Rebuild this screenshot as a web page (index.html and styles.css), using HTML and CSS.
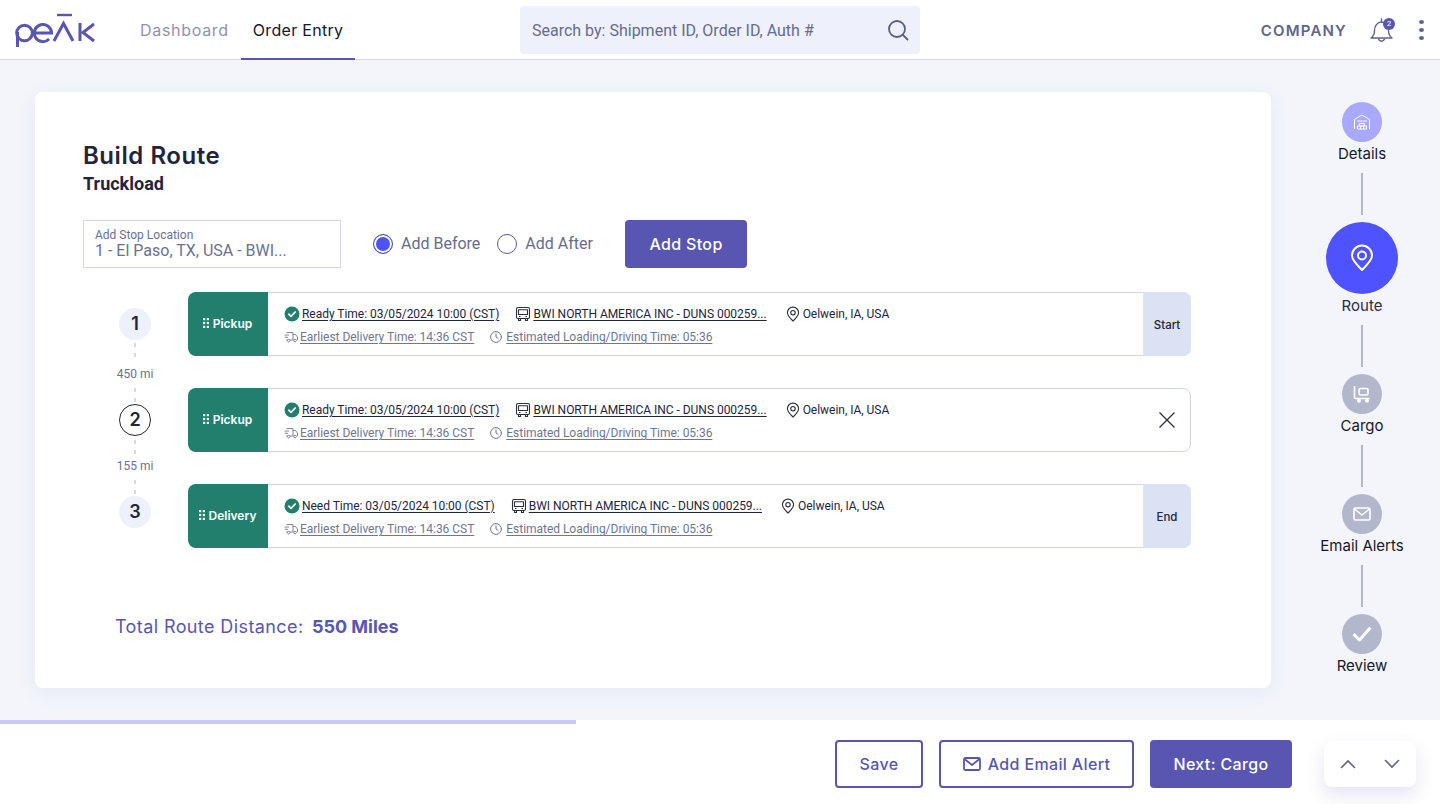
FILE: index.html
```html
<!DOCTYPE html>
<html lang="en">

<head>
    <meta charset="UTF-8" />
    <meta name="viewport" content="width=device-width, initial-scale=1.0" />
    <title>Build Route</title>
    <link rel="stylesheet" href="styles.css">
</head>

<body>
    <svg class="defs" width="0" height="0" aria-hidden="true">
        <symbol id="i-check" viewBox="0 0 16 16">
            <circle cx="8" cy="8" r="7.500" fill="#237f6d" />
            <path d="M4.800 8.200l2.200 2.200 4.200-4.400" fill="none" stroke="#fff" stroke-width="1.700" stroke-linecap="round" stroke-linejoin="round" />
        </symbol>
        <symbol id="i-bus" viewBox="0 0 16 16">
            <g fill="none" stroke="#2b2d42" stroke-width="1.100" stroke-linejoin="round">
                <rect x="1.500" y="1.500" width="13" height="11" rx="1.500" />
                <path d="M3.500 3.800h9v4.700h-9z" />
                <path d="M3.500 12.500v2h2v-2M10.500 12.500v2h2v-2" />
                <path d="M4 10.500h1.500M10.500 10.500H12" />
            </g>
        </symbol>
        <symbol id="i-pin" viewBox="0 0 16 16">
            <g fill="none" stroke="#2b2d42" stroke-width="1.100" stroke-linejoin="round">
                <path d="M8 15c-3-3-5.600-5.300-5.600-8.300a5.600 5.600 0 0 1 11.200 0C13.600 9.700 11 12 8 15z" />
                <circle cx="8" cy="6.700" r="2.200" />
            </g>
        </symbol>
        <symbol id="i-truck" viewBox="0 0 14 12">
            <g fill="none" stroke="#7f84a5" stroke-width="1">
                <path d="M2.500 1.500h6.500v7.500H6M3.500 9H2M.5 4H5M.5 6.300H4" />
                <path d="M9 3.500h2.500L13.500 6v3h-1M9 9h.5" />
                <circle cx="4.700" cy="9.500" r="1.300" />
                <circle cx="11" cy="9.500" r="1.300" />
            </g>
        </symbol>
        <symbol id="i-clock" viewBox="0 0 12 12">
            <g fill="none" stroke="#6f7596" stroke-width="1" stroke-linecap="round">
                <circle cx="6" cy="6" r="5.400" />
                <path d="M6 2.800V6l2 1.300" />
            </g>
        </symbol>
        <symbol id="i-grip" viewBox="0 0 6 10">
            <g fill="#fff">
                <rect width="2.200" height="2.200" />
                <rect x="3.800" width="2.200" height="2.200" />
                <rect y="3.900" width="2.200" height="2.200" />
                <rect x="3.800" y="3.900" width="2.200" height="2.200" />
                <rect y="7.800" width="2.200" height="2.200" />
                <rect x="3.800" y="7.800" width="2.200" height="2.200" />
            </g>
        </symbol>
    </svg>

    <header class="topbar">
        <div class="topbar-left">
            <svg class="logo" width="82" height="36" viewBox="0 0 82 36" role="img" aria-label="Peak">
                <g fill="none" stroke="#5856b0" stroke-width="3">
                    <path d="M3.500 35V20" />
                    <circle cx="10.500" cy="21" r="7.800" />
                    <path d="M20.500 21h17a8.600 8.600 0 1 0-2.400 6" />
                    <path d="M40 29l9.500-17.500L59 29" />
                    <path d="M43 3h15" stroke-width="2.400" />
                    <path d="M66 11v18M80 12l-11 8.500L80 29" />
                </g>
            </svg>
            <nav class="tabs">
                <a class="tab" href="#">Dashboard</a>
                <a class="tab tab-active" href="#">Order Entry</a>
            </nav>
        </div>

        <div class="search">
            <span>Search by: Shipment ID, Order ID, Auth #</span>
            <svg width="22" height="22" viewBox="0 0 22 22" fill="none" stroke="#5a6080" stroke-width="1.800" stroke-linecap="round">
                <circle cx="10" cy="10" r="8" />
                <path d="M16 16l4.500 4.500" />
            </svg>
        </div>

        <div class="topbar-right">
            <span class="company">COMPANY</span>
            <div class="bell">
                <svg width="24" height="26" viewBox="0 0 24 26" fill="none" stroke="#5f6588" stroke-width="1.400" stroke-linejoin="round" stroke-linecap="round">
                    <path d="M1 21c2.500-1.800 3.500-4 3.500-7.500C4.500 9 7.300 5 11.500 5c4.200 0 7 4 7 8.500 0 3.500 1 5.700 3.500 7.500z" />
                    <path d="M8.500 22c.5 1.500 1.500 2.200 3 2.200s2.500-.7 3-2.200" />
                    <path d="M11.500 2v3" />
                </svg>
                <span class="bell-badge">2</span>
            </div>
            <div class="kebab"><i></i><i></i><i></i></div>
        </div>
    </header>

    <main class="page">
        <section class="card">
            <h1>Build Route</h1>
            <h2>Truckload</h2>

            <div class="add-row">
                <div class="field">
                    <label>Add Stop Location</label>
                    <div class="field-value">1 - El Paso, TX, USA - BWI...</div>
                </div>
                <div class="radios">
                    <span class="radio radio-on"></span><span class="radio-label">Add Before</span>
                    <span class="radio"></span><span class="radio-label">Add After</span>
                </div>
                <button class="btn btn-solid btn-add" type="button">Add Stop</button>
            </div>

            <div class="route">
                <div class="rail">
                    <span class="num">1</span>
                    <span class="dots dots-a"></span>
                    <span class="miles miles-a">450 mi</span>
                    <span class="dots dots-b"></span>
                    <span class="num num-current">2</span>
                    <span class="dots dots-c"></span>
                    <span class="miles miles-b">155 mi</span>
                    <span class="dots dots-b"></span>
                    <span class="num">3</span>
                </div>

                <div class="stops">
                    <div class="stop">
                        <div class="stop-tag"><svg width="6" height="10"><use href="#i-grip" /></svg>Pickup</div>
                        <div class="stop-body">
                            <div class="stop-line">
                                <svg width="16" height="16"><use href="#i-check" /></svg>
                                <a class="link-dark">Ready Time: 03/05/2024 10:00 (CST)</a>
                                <svg class="ico-bus" width="16" height="16"><use href="#i-bus" /></svg>
                                <a class="link-dark">BWI NORTH AMERICA INC - DUNS 000259...</a>
                                <svg class="ico-pin" width="16" height="16"><use href="#i-pin" /></svg>
                                <span>Oelwein, IA, USA</span>
                            </div>
                            <div class="stop-line stop-sub">
                                <svg width="14" height="12"><use href="#i-truck" /></svg>
                                <a class="link-soft">Earliest Delivery Time: 14:36 CST</a>
                                <svg class="ico-clock" width="12" height="12"><use href="#i-clock" /></svg>
                                <a class="link-soft">Estimated Loading/Driving Time: 05:36</a>
                            </div>
                        </div>
                        <div class="stop-end">Start</div>
                    </div>

                    <div class="stop">
                        <div class="stop-tag"><svg width="6" height="10"><use href="#i-grip" /></svg>Pickup</div>
                        <div class="stop-body">
                            <div class="stop-line">
                                <svg width="16" height="16"><use href="#i-check" /></svg>
                                <a class="link-dark">Ready Time: 03/05/2024 10:00 (CST)</a>
                                <svg class="ico-bus" width="16" height="16"><use href="#i-bus" /></svg>
                                <a class="link-dark">BWI NORTH AMERICA INC - DUNS 000259...</a>
                                <svg class="ico-pin" width="16" height="16"><use href="#i-pin" /></svg>
                                <span>Oelwein, IA, USA</span>
                            </div>
                            <div class="stop-line stop-sub">
                                <svg width="14" height="12"><use href="#i-truck" /></svg>
                                <a class="link-soft">Earliest Delivery Time: 14:36 CST</a>
                                <svg class="ico-clock" width="12" height="12"><use href="#i-clock" /></svg>
                                <a class="link-soft">Estimated Loading/Driving Time: 05:36</a>
                            </div>
                        </div>
                        <div class="stop-close">
                            <svg width="16" height="16" viewBox="0 0 16 16" fill="none" stroke="#2b2d42" stroke-width="1.300">
                                <path d="M.5.500l15 15M15.500.500l-15 15" />
                            </svg>
                        </div>
                    </div>

                    <div class="stop">
                        <div class="stop-tag"><svg width="6" height="10"><use href="#i-grip" /></svg>Delivery</div>
                        <div class="stop-body">
                            <div class="stop-line">
                                <svg width="16" height="16"><use href="#i-check" /></svg>
                                <a class="link-dark">Need Time: 03/05/2024 10:00 (CST)</a>
                                <svg class="ico-bus" width="16" height="16"><use href="#i-bus" /></svg>
                                <a class="link-dark">BWI NORTH AMERICA INC - DUNS 000259...</a>
                                <svg class="ico-pin" width="16" height="16"><use href="#i-pin" /></svg>
                                <span>Oelwein, IA, USA</span>
                            </div>
                            <div class="stop-line stop-sub">
                                <svg width="14" height="12"><use href="#i-truck" /></svg>
                                <a class="link-soft">Earliest Delivery Time: 14:36 CST</a>
                                <svg class="ico-clock" width="12" height="12"><use href="#i-clock" /></svg>
                                <a class="link-soft">Estimated Loading/Driving Time: 05:36</a>
                            </div>
                        </div>
                        <div class="stop-end">End</div>
                    </div>
                </div>
            </div>

            <p class="total">Total Route Distance: <b>550 Miles</b></p>
        </section>

        <aside class="steps">
            <div class="step-icon step-done">
                <svg width="18" height="18" viewBox="0 0 18 18" fill="none" stroke="#fff" stroke-width="1">
                    <path d="M1.500 16V6.500L9 2l7.500 4.500V16" />
                    <path d="M4 8h10M6.500 10.500h5v2.500h-5zM4.500 13h9v3h-9zM7.500 13v3M10.500 13v3" />
                </svg>
            </div>
            <span class="step-label">Details</span>
            <span class="step-line"></span>

            <div class="step-icon step-current">
                <svg width="24" height="28" viewBox="0 0 24 28" fill="none" stroke="#fff" stroke-width="2">
                    <path d="M12 26C7 20.500 2 16.500 2 11.500a10 10 0 0 1 20 0C22 16.500 17 20.500 12 26z" stroke-linejoin="round" />
                    <circle cx="12" cy="11.500" r="4" />
                </svg>
            </div>
            <span class="step-label step-label-current">Route</span>
            <span class="step-line"></span>

            <div class="step-icon">
                <svg width="18" height="18" viewBox="0 0 18 18" fill="none" stroke="#fff" stroke-width="1.600" stroke-linejoin="round">
                    <path d="M1.500 1v11.500c0 .6.400 1 1 1H16.500" />
                    <rect x="6" y="3.500" width="9" height="6.500" rx="1.500" />
                    <circle cx="6" cy="15.800" r="1.200" fill="#fff" />
                    <circle cx="14" cy="15.800" r="1.200" fill="#fff" />
                </svg>
            </div>
            <span class="step-label">Cargo</span>
            <span class="step-line"></span>

            <div class="step-icon">
                <svg width="18" height="14" viewBox="0 0 18 14" fill="none" stroke="#fff" stroke-width="1.600" stroke-linejoin="round">
                    <rect x="1" y="1" width="16" height="12" rx="1.500" />
                    <path d="M1.500 2l7.500 6 7.500-6" />
                </svg>
            </div>
            <span class="step-label">Email Alerts</span>
            <span class="step-line"></span>

            <div class="step-icon">
                <svg width="20" height="16" viewBox="0 0 20 16" fill="none" stroke="#fff" stroke-width="3" stroke-linejoin="round">
                    <path d="M1.500 8L7.500 14 18.500 1.500" />
                </svg>
            </div>
            <span class="step-label">Review</span>
        </aside>
    </main>

    <footer class="bottom">
        <div class="progress"></div>
        <div class="actions">
            <button class="btn btn-line btn-save" type="button">Save</button>
            <button class="btn btn-line btn-alert" type="button">
                <svg width="18" height="14" viewBox="0 0 18 14" fill="none" stroke="#5856b0" stroke-width="1.800" stroke-linejoin="round">
                    <rect x="1" y="1" width="16" height="12" rx="1.500" />
                    <path d="M1.500 2l7.500 6 7.500-6" />
                </svg>
                Add Email Alert
            </button>
            <button class="btn btn-solid btn-next" type="button">Next: Cargo</button>
            <div class="arrows">
                <svg width="16" height="10" viewBox="0 0 16 10" fill="none" stroke="#5f6588" stroke-width="1.600"><path d="M1 9l7-7 7 7" /></svg>
                <svg width="16" height="10" viewBox="0 0 16 10" fill="none" stroke="#5f6588" stroke-width="1.600"><path d="M1 1l7 7 7-7" /></svg>
            </div>
        </div>
    </footer>
</body>

</html>
```

FILE: styles.css
```css
* {
    box-sizing: border-box;
}

body {
    margin: 0;
    height: 804px;
    overflow: hidden;
    font-family: Roboto, sans-serif;
    background: #f3f5fb;
    color: #22243c;
    display: flex;
    flex-direction: column;
}

.defs {
    position: absolute;
}

/* top bar */
.topbar {
    height: 60px;
    background: #fff;
    border-bottom: 1px solid #d3d6e2;
    display: grid;
    grid-template-columns: 1fr 400px 1fr;
    align-items: center;
    flex-shrink: 0;
}

.topbar-left {
    display: flex;
    align-items: center;
    height: 100%;
    padding-left: 14px;
}

.logo {
    margin-top: -1px;
}

.tabs {
    display: flex;
    height: 100%;
    margin-left: 32px;
}

.tab {
    display: flex;
    align-items: center;
    padding: 0 12px;
    font-family: Inter, sans-serif;
    font-size: 16px;
    letter-spacing: 0.7px;
    color: #8f93ad;
    text-decoration: none;
    white-space: nowrap;
}

.tab-active {
    color: #16172a;
    letter-spacing: 0.3px;
    border-bottom: 2px solid #5856b0;
    height: 60px;
    padding-top: 2px;
}

.search {
    height: 48px;
    background: #eef0fb;
    border-radius: 4px;
    display: flex;
    align-items: center;
    justify-content: space-between;
    padding: 0 11px 0 12px;
    font-size: 16px;
    color: #666c8c;
}

.topbar-right {
    display: flex;
    align-items: center;
    justify-content: flex-end;
    padding-right: 16px;
}

.company {
    font-family: Inter, sans-serif;
    font-weight: 600;
    font-size: 15px;
    letter-spacing: 1.2px;
    color: #5f6588;
}

.bell {
    position: relative;
    width: 24px;
    height: 26px;
    margin-left: 23px;
}

.bell-badge {
    position: absolute;
    top: 1px;
    right: -1px;
    width: 12px;
    height: 12px;
    border-radius: 50%;
    background: #5856b0;
    color: #fff;
    font-size: 8px;
    line-height: 12px;
    text-align: center;
}

.kebab {
    display: flex;
    flex-direction: column;
    gap: 4px;
    margin-left: 25px;
}

.kebab i {
    display: block;
    width: 5px;
    height: 4px;
    border-radius: 50%;
    background: #5f6588;
}

/* main area */
.page {
    flex: 1;
    display: flex;
    align-items: flex-start;
    padding: 32px 0 0 35px;
}

.card {
    width: 1236px;
    height: 596px;
    background: #fff;
    border-radius: 8px;
    box-shadow: 0 4px 20px rgba(88, 86, 176, 0.08);
    padding: 49px 48px 48px;
}

h1 {
    margin: 0;
    font-family: Inter, sans-serif;
    font-size: 24px;
    line-height: 30px;
    font-weight: 600;
    letter-spacing: 0.55px;
}

h2 {
    margin: 1px 0 0;
    font-size: 18px;
    line-height: 24px;
    font-weight: 700;
}

.add-row {
    display: flex;
    align-items: center;
    margin-top: 24px;
}

.field {
    width: 258px;
    height: 48px;
    border: 1px solid #cdd6ea;
    padding: 8px 11px 0;
}

.field label {
    display: block;
    font-size: 12px;
    line-height: 13px;
    color: #6b7190;
}

.field-value {
    font-size: 16px;
    line-height: 18px;
    color: #6b7190;
}

.radios {
    display: flex;
    align-items: center;
    margin-left: 32px;
    width: 252px;
    margin-top: -1px;
}

.radio {
    width: 20px;
    height: 20px;
    border-radius: 50%;
    border: 1px solid #5856b0;
    flex-shrink: 0;
}

.radio-on {
    background: #4f52ff;
    box-shadow: inset 0 0 0 2px #fff;
}

.radio-label {
    margin: 0 17px 0 8px;
    font-size: 16px;
    color: #666c8c;
    white-space: nowrap;
}

.btn {
    height: 48px;
    border-radius: 4px;
    font-family: Inter, sans-serif;
    font-size: 16px;
    font-weight: 500;
    letter-spacing: 0.35px;
    cursor: pointer;
}

.btn-solid {
    background: #5856b0;
    border: none;
    color: #fff;
}

.btn-line {
    background: #fff;
    border: 2px solid #5856b0;
    color: #5856b0;
}

.btn-add {
    width: 122px;
}

/* route list */
.route {
    display: flex;
    margin-top: 24px;
}

.rail {
    width: 40px;
    margin-left: 32px;
    padding-top: 16px;
    display: flex;
    flex-direction: column;
    align-items: center;
}

.num {
    width: 32px;
    height: 32px;
    border-radius: 50%;
    background: #eef0fb;
    font-family: Inter, sans-serif;
    font-weight: 600;
    font-size: 18px;
    line-height: 32px;
    text-align: center;
    flex-shrink: 0;
}

.num-current {
    background: #fff;
    border: 1px solid #22243c;
    line-height: 30px;
}

.dots {
    width: 2px;
    background: repeating-linear-gradient(to bottom, #d4d8e8 0 4px, transparent 4px 10px);
}

.dots-a {
    height: 18px;
    margin-top: 3px;
}

.dots-b {
    height: 14px;
    margin: 7px 0 2px;
}

.dots-c {
    height: 14px;
    margin-top: 4px;
}

.miles {
    font-size: 12px;
    line-height: 14px;
    color: #6b7190;
    white-space: nowrap;
}

.miles-a {
    margin-top: 6px;
}

.miles-b {
    margin-top: 5px;
}

.stops {
    margin-left: 33px;
    width: 1003px;
    display: flex;
    flex-direction: column;
    gap: 32px;
}

.stop {
    height: 64px;
    display: flex;
    border: 1px solid #cfd5e6;
    border-radius: 8px;
}

.stop-tag {
    width: 80px;
    margin: -1px 0 -1px -1px;
    padding: 0 1px 2px 0;
    border-radius: 8px 0 0 8px;
    background: #237f6d;
    color: #fff;
    font-family: Inter, sans-serif;
    font-size: 12px;
    font-weight: 600;
    display: flex;
    align-items: center;
    justify-content: center;
    gap: 4px;
}

.stop-body {
    flex: 1;
    padding: 12px 0 0 16px;
    font-size: 12px;
    color: #22243c;
    letter-spacing: -0.03px;
}

.stop-line {
    display: flex;
    align-items: center;
    height: 18px;
    white-space: nowrap;
}

.stop-sub {
    margin-top: 5px;
    height: 18px;
}

.link-dark {
    text-decoration: underline;
    text-underline-offset: 2px;
    margin-left: 2px;
}

.link-soft {
    color: #6f7596;
    text-decoration: underline;
    text-underline-offset: 2px;
    margin-left: 2px;
}

.ico-bus {
    margin-left: 16px;
}

.ico-pin {
    margin: 0 2px 0 18px;
}

.ico-clock {
    margin-left: 16px;
    margin-right: 2px;
}

.stop-end {
    width: 48px;
    margin: -1px -1px -1px 0;
    padding-top: 1px;
    border-radius: 0 8px 8px 0;
    background: #dbe2f3;
    font-family: Inter, sans-serif;
    font-size: 11.5px;
    font-weight: 500;
    display: flex;
    align-items: center;
    justify-content: center;
}

.stop-close {
    width: 48px;
    padding-left: 2px;
    display: flex;
    align-items: center;
    justify-content: center;
}

.total {
    margin: 68px 0 0 32px;
    font-family: Inter, sans-serif;
    font-size: 18px;
    letter-spacing: 0.4px;
    color: #5856b0;
}

.total b {
    font-weight: 700;
    letter-spacing: 0;
    margin-left: 3px;
}

/* right stepper */
.steps {
    width: 100px;
    margin: 10px 0 0 41px;
    display: flex;
    flex-direction: column;
    align-items: center;
}

.step-icon {
    width: 40px;
    height: 40px;
    border-radius: 50%;
    background: #b3b7cc;
    display: flex;
    align-items: center;
    justify-content: center;
    flex-shrink: 0;
}

.step-done {
    background: #a8a8ff;
}

.step-current {
    width: 72px;
    height: 72px;
    background: #4f52ff;
}

.step-label {
    margin-top: 2px;
    font-family: Inter, sans-serif;
    font-size: 15px;
    line-height: 20px;
    color: #16172a;
    white-space: nowrap;
}

.step-label-current {
    color: #2b2d42;
}

.step-line {
    width: 2px;
    height: 42px;
    margin: 9px 0 7px;
    background: #b3b7cc;
}

/* bottom bar */
.bottom {
    height: 84px;
    background: #fff;
    flex-shrink: 0;
}

.progress {
    width: 576px;
    height: 4px;
    background: #c9c9f7;
}

.actions {
    display: flex;
    align-items: center;
    justify-content: flex-end;
    padding: 16px 24px 0 0;
}

.btn-save {
    width: 88px;
}

.btn-alert {
    width: 195px;
    margin-left: 16px;
    display: flex;
    align-items: center;
    justify-content: center;
    gap: 7px;
}

.btn-next {
    width: 142px;
    margin-left: 16px;
}

.arrows {
    width: 92px;
    height: 46px;
    margin-left: 32px;
    border-radius: 8px;
    background: #fff;
    box-shadow: 0 8px 18px rgba(88, 86, 176, 0.16);
    display: flex;
    align-items: center;
    justify-content: space-between;
    padding: 0 16px;
}
```
